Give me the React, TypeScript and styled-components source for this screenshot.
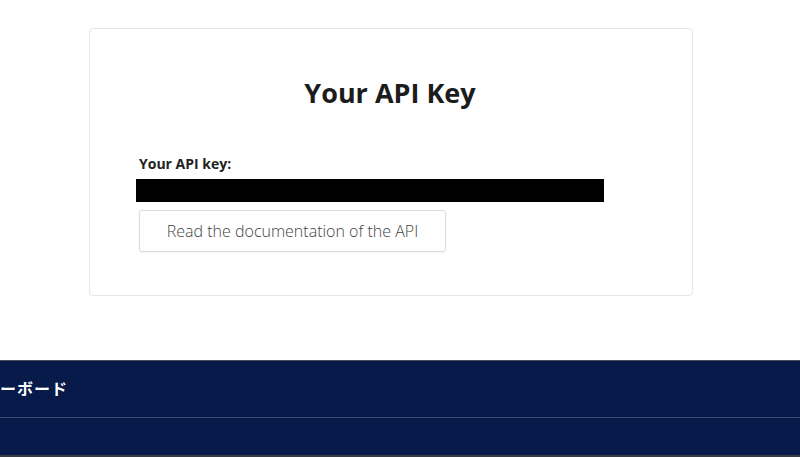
import React from 'react'
import styled, { createGlobalStyle } from 'styled-components'

const GlobalStyle = createGlobalStyle`
    html, body {
        margin: 0;
        padding: 0;
        background: #ffffff;
        font-family: "Open Sans", "Noto Sans", "Liberation Sans", sans-serif;
        overflow: hidden;
    }
`

const Page = styled.div`
    width: 800px;
    height: 457px;
    display: flex;
    flex-direction: column;
    overflow: hidden;
`

const Card = styled.section`
    box-sizing: border-box;
    width: 604px;
    height: 268px;
    margin: 28px 0 0 89px;
    padding: 48px 46px 0 46px;
    border: 1px solid #e6e6e6;
    border-radius: 4px;
    display: flex;
    flex-direction: column;
`

const Title = styled.h1`
    margin: 0;
    font-size: 27px;
    line-height: 32px;
    font-weight: 700;
    color: #1c1c1c;
    text-align: center;
    padding-right: 2px;
`

const Label = styled.div`
    margin: 46px 0 0 3px;
    font-size: 14px;
    line-height: 18px;
    font-weight: 700;
    color: #222;
`

const KeyBar = styled.div`
    margin-top: 6px;
    width: 468px;
    height: 23px;
    background: #000;
`

const DocButton = styled.button`
    box-sizing: border-box;
    margin: 8px 0 0 3px;
    width: 307px;
    height: 42px;
    padding: 0;
    background: #fff;
    border: 1px solid #dcdcdc;
    border-radius: 3px;
    box-shadow: 0 1px 2px rgba(0, 0, 0, 0.05);
    font-family: "Open Sans", "Noto Sans", sans-serif;
    font-size: 16px;
    font-weight: 300;
    color: #444;
    text-align: center;
`

const Footer = styled.footer`
    margin-top: 64px;
    flex: 1;
    background: #071a49;
    border-top: 1px solid #4b4d5e;
    border-bottom: 2px solid #3a3a44;
    display: flex;
    flex-direction: column;
`

const FooterRow = styled.div<{ $height: number; $divider?: boolean }>`
    height: ${p => p.$height}px;
    display: flex;
    align-items: center;
    border-bottom: ${p => (p.$divider ? '1px solid #3d4a74' : 'none')};
`

const NavText = styled.span`
    padding-bottom: 3px;
    font-family: "Noto Sans CJK JP", "Noto Sans", sans-serif;
    font-size: 16px;
    font-weight: 700;
    letter-spacing: 1px;
    color: #ffffff;
    white-space: nowrap;
`

const App = () => {
    return (
        <>
            <GlobalStyle />
            <Page>
                <Card>
                    <Title>Your API Key</Title>
                    <Label>Your API key:</Label>
                    <KeyBar />
                    <DocButton>Read the documentation of the API</DocButton>
                </Card>
                <Footer>
                    <FooterRow $height={56} $divider>
                        <NavText>ーボード</NavText>
                    </FooterRow>
                    <FooterRow $height={37} />
                </Footer>
            </Page>
        </>
    )
}

export default App
